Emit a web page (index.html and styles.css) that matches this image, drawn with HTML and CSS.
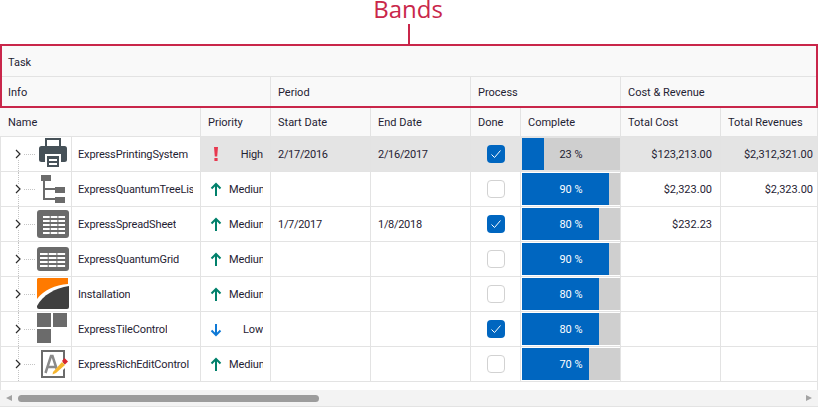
FILE: index.html
```html
<!DOCTYPE html>
<html lang="en">
<head>
  <meta charset="UTF-8">
  <title>Bands</title>
  <link rel="stylesheet" href="styles.css">
</head>
<body>
  <!-- Callout over the band rows -->
  <div class="callout">Bands</div>
  <div class="callout-line"></div>

  <div class="bands">
    <div class="band-row">
      <div class="band band-full">Task</div>
    </div>
    <div class="band-row band-grid">
      <div class="band">Info</div>
      <div class="band">Period</div>
      <div class="band">Process</div>
      <div class="band">Cost &amp; Revenue</div>
    </div>
  </div>

  <!-- Column headers -->
  <div class="row head">
    <div class="cell">Name</div>
    <div class="cell">Priority</div>
    <div class="cell">Start Date</div>
    <div class="cell">End Date</div>
    <div class="cell">Done</div>
    <div class="cell">Complete</div>
    <div class="cell">Total Cost</div>
    <div class="cell">Total Revenues</div>
  </div>

  <!-- Data rows -->
  <div class="row selected">
    <div class="cell name">
      <div class="tree first"><svg class="chevron" viewBox="0 0 6 10"><path d="M1 1l4 4-4 4"/></svg></div>
      <svg class="icon" viewBox="0 0 32 34">
        <path fill="none" stroke="#465158" stroke-width="2" d="M9 10V2h14v8"/>
        <rect x="2" y="9" width="28" height="16" rx="2.500" fill="#465158"/>
        <rect x="8" y="17" width="16" height="15" fill="#fff"/>
        <rect x="10" y="19" width="12" height="11" fill="#465158"/>
        <path stroke="#fff" stroke-width="2" d="M12 23h8M12 27h8"/>
      </svg>
      <div class="label"><div class="label-text">ExpressPrintingSystem</div></div>
    </div>
    <div class="cell priority">
      <svg class="prio" viewBox="0 0 12 16"><path fill="#e8384f" d="M4 1h4l-.8 9.500H4.800zM4.400 12h3.200v3H4.400z"/></svg>
      <div class="prio-text">High</div>
    </div>
    <div class="cell date">2/17/2016</div>
    <div class="cell date">2/16/2017</div>
    <div class="cell done"><div class="check on"><svg viewBox="0 0 18 18"><path d="M4.500 9.500l3 3 6-7"/></svg></div></div>
    <div class="cell progress"><div class="track"><div class="fill" style="width: 22px"></div><div class="pct">23 %</div></div></div>
    <div class="cell money">$123,213.00</div>
    <div class="cell money">$2,312,321.00</div>
  </div>

  <div class="row">
    <div class="cell name">
      <div class="tree"><svg class="chevron" viewBox="0 0 6 10"><path d="M1 1l4 4-4 4"/></svg></div>
      <svg class="icon" viewBox="0 0 32 34">
        <path fill="#6b6b6b" d="M4 3h10v6H8v7h10v2H8v8h10v2H6V9H4z"/>
        <path fill="#6b6b6b" d="M18 15h10v6H18zM18 25h10v6H18z"/>
      </svg>
      <div class="label"><div class="label-text">ExpressQuantumTreeList</div></div>
    </div>
    <div class="cell priority">
      <svg class="prio" viewBox="0 0 12 16"><path class="arrow-up" d="M6 15V3M1.500 7.500L6 3l4.500 4.500"/></svg>
      <div class="prio-text">Medium</div>
    </div>
    <div class="cell"></div>
    <div class="cell"></div>
    <div class="cell done"><div class="check"></div></div>
    <div class="cell progress"><div class="track"><div class="fill" style="width: 87px"></div><div class="pct light">90 %</div></div></div>
    <div class="cell money">$2,323.00</div>
    <div class="cell money">$2,323.00</div>
  </div>

  <div class="row">
    <div class="cell name">
      <div class="tree"><svg class="chevron" viewBox="0 0 6 10"><path d="M1 1l4 4-4 4"/></svg></div>
      <svg class="icon" viewBox="0 0 32 34">
        <rect y="3" width="32" height="28" rx="3" fill="#6b6b6b"/>
        <path stroke="#fff" stroke-width="2" stroke-dasharray="6.700 1" d="M6 10h22M6 14h22M6 18h22M6 22h22M6 26h22"/>
      </svg>
      <div class="label"><div class="label-text">ExpressSpreadSheet</div></div>
    </div>
    <div class="cell priority">
      <svg class="prio" viewBox="0 0 12 16"><path class="arrow-up" d="M6 15V3M1.500 7.500L6 3l4.500 4.500"/></svg>
      <div class="prio-text">Medium</div>
    </div>
    <div class="cell date">1/7/2017</div>
    <div class="cell date">1/8/2018</div>
    <div class="cell done"><div class="check on"><svg viewBox="0 0 18 18"><path d="M4.500 9.500l3 3 6-7"/></svg></div></div>
    <div class="cell progress"><div class="track"><div class="fill" style="width: 77px"></div><div class="pct light">80 %</div></div></div>
    <div class="cell money">$232.23</div>
    <div class="cell money"></div>
  </div>

  <div class="row">
    <div class="cell name">
      <div class="tree"><svg class="chevron" viewBox="0 0 6 10"><path d="M1 1l4 4-4 4"/></svg></div>
      <svg class="icon" viewBox="0 0 32 34">
        <rect y="5" width="32" height="24" rx="3" fill="#6b6b6b"/>
        <path stroke="#fff" stroke-width="2" stroke-dasharray="7.700 1" d="M3 12h26M3 16h26M3 20h26M3 24h26"/>
      </svg>
      <div class="label"><div class="label-text">ExpressQuantumGrid</div></div>
    </div>
    <div class="cell priority">
      <svg class="prio" viewBox="0 0 12 16"><path class="arrow-up" d="M6 15V3M1.500 7.500L6 3l4.500 4.500"/></svg>
      <div class="prio-text">Medium</div>
    </div>
    <div class="cell"></div>
    <div class="cell"></div>
    <div class="cell done"><div class="check"></div></div>
    <div class="cell progress"><div class="track"><div class="fill" style="width: 87px"></div><div class="pct light">90 %</div></div></div>
    <div class="cell money"></div>
    <div class="cell money"></div>
  </div>

  <div class="row">
    <div class="cell name">
      <div class="tree"><svg class="chevron" viewBox="0 0 6 10"><path d="M1 1l4 4-4 4"/></svg></div>
      <svg class="icon" viewBox="0 0 32 34">
        <path fill="#ff7a00" d="M1 1h30v6C18 8 7 13 0 22V2z"/>
        <path fill="#3f3f3f" d="M32 9v21a2 2 0 0 1-2 2H2a2 2 0 0 1-2-2v-1C6 18 18 11 32 9z"/>
      </svg>
      <div class="label"><div class="label-text">Installation</div></div>
    </div>
    <div class="cell priority">
      <svg class="prio" viewBox="0 0 12 16"><path class="arrow-up" d="M6 15V3M1.500 7.500L6 3l4.500 4.500"/></svg>
      <div class="prio-text">Medium</div>
    </div>
    <div class="cell"></div>
    <div class="cell"></div>
    <div class="cell done"><div class="check"></div></div>
    <div class="cell progress"><div class="track"><div class="fill" style="width: 77px"></div><div class="pct light">80 %</div></div></div>
    <div class="cell money"></div>
    <div class="cell money"></div>
  </div>

  <div class="row">
    <div class="cell name">
      <div class="tree"><svg class="chevron" viewBox="0 0 6 10"><path d="M1 1l4 4-4 4"/></svg></div>
      <svg class="icon" viewBox="0 0 32 34">
        <path fill="#6b6b6b" d="M0 1h14v14H0zM16 1h14v14H16zM0 17h14v14H0z"/>
      </svg>
      <div class="label"><div class="label-text">ExpressTileControl</div></div>
    </div>
    <div class="cell priority">
      <svg class="prio" viewBox="0 0 12 16"><path class="arrow-down" d="M6 3v11M1.500 9.500L6 14l4.500-4.500"/></svg>
      <div class="prio-text">Low</div>
    </div>
    <div class="cell"></div>
    <div class="cell"></div>
    <div class="cell done"><div class="check on"><svg viewBox="0 0 18 18"><path d="M4.500 9.500l3 3 6-7"/></svg></div></div>
    <div class="cell progress"><div class="track"><div class="fill" style="width: 77px"></div><div class="pct light">80 %</div></div></div>
    <div class="cell money"></div>
    <div class="cell money"></div>
  </div>

  <div class="row">
    <div class="cell name">
      <div class="tree"><svg class="chevron" viewBox="0 0 6 10"><path d="M1 1l4 4-4 4"/></svg></div>
      <svg class="icon" viewBox="0 0 32 34">
        <rect x="5" y="4" width="22" height="26" fill="#fff" stroke="#6b6b6b" stroke-width="2"/>
        <path fill="none" stroke="#8a8a8a" stroke-width="2.500" d="M8.500 26l5.500-17h1.500l5.500 17M11 20h9"/>
        <path fill="#fff" d="M15 27l10-12 5 4-10 10z"/>
        <path fill="#f5b52e" d="M16 25l9-10 3 3-9 8-3.500 1.500z"/>
        <path fill="#d9262e" d="M25 14l2.500-3 3.500 3.500-3 3z"/>
      </svg>
      <div class="label"><div class="label-text">ExpressRichEditControl</div></div>
    </div>
    <div class="cell priority">
      <svg class="prio" viewBox="0 0 12 16"><path class="arrow-up" d="M6 15V3M1.500 7.500L6 3l4.500 4.500"/></svg>
      <div class="prio-text">Medium</div>
    </div>
    <div class="cell"></div>
    <div class="cell"></div>
    <div class="cell done"><div class="check"></div></div>
    <div class="cell progress"><div class="track"><div class="fill" style="width: 67px"></div><div class="pct light">70 %</div></div></div>
    <div class="cell money"></div>
    <div class="cell money"></div>
  </div>

  <!-- Empty area and horizontal scrollbar -->
  <div class="blank"></div>
  <div class="scrollbar">
    <div class="scroll-left"></div>
    <div class="thumb"></div>
    <div class="scroll-right"></div>
  </div>
</body>
</html>
```

FILE: styles.css
```css
body {
  margin: 0;
  background-color: #fff;
  color: #1f2233;
  font-family: Roboto, "Liberation Sans", sans-serif;
  font-size: 11px;
  overflow: hidden;
}

/* Callout */
.callout {
  height: 24px;
  padding-right: 2px;
  line-height: 18px;
  text-align: center;
  color: #c9264a;
  font-family: "Open Sans", sans-serif;
  font-size: 24px;
}

.callout-line {
  width: 2px;
  height: 20px;
  margin-left: 408px;
  background-color: #c9264a;
}

/* Bands */
.bands {
  height: 64px;
  box-sizing: border-box;
  border: 2px solid #c9264a;
  background-color: #f9f9f9;
}

.band-row {
  height: 31px;
  box-sizing: border-box;
  border-bottom: 1px solid #e3e3e3;
}

.band-row.band-grid {
  height: 29px;
  border-bottom: none;
  display: grid;
  grid-template-columns: 269px 200px 150px 1fr;
}

.band {
  display: flex;
  align-items: center;
  height: 100%;
  padding-left: 7px;
  padding-top: 2px;
  box-sizing: border-box;
  border-right: 1px solid #e3e3e3;
}

.band:first-child {
  padding-left: 6px;
}

.band:last-child,
.band-full {
  border-right: none;
}

/* Grid rows */
.row {
  display: grid;
  grid-template-columns: 201px 70px 100px 100px 50px 100px 100px 97px;
  height: 35px;
  box-sizing: border-box;
}

.row.head {
  height: 29px;
  background-color: #f9f9f9;
}

.row.head .cell {
  padding-top: 1px;
}

.row.selected {
  background-color: #e4e4e4;
}

.cell {
  display: flex;
  align-items: center;
  box-sizing: border-box;
  padding-left: 7px;
  border-right: 1px solid #e3e3e3;
  border-bottom: 1px solid #e3e3e3;
  white-space: nowrap;
  overflow: hidden;
}

.head .cell:first-child {
  padding-left: 8px;
}

.cell.date {
  letter-spacing: -0.3px;
}

/* Name column */
.cell.name {
  padding-left: 0;
  background-color: #fff;
  border-left: 1px solid #e3e3e3;
}

.tree {
  position: relative;
  width: 36px;
  height: 34px;
  flex: none;
}

.tree::before {
  content: "";
  position: absolute;
  left: 17px;
  top: 0;
  bottom: 0;
  border-left: 1px dotted #c4c4c4;
}

.tree.first::before {
  top: 17px;
}

.tree::after {
  content: "";
  position: absolute;
  left: 23px;
  width: 11px;
  top: 17px;
  border-top: 1px dotted #c4c4c4;
}

.chevron {
  position: absolute;
  left: 14px;
  top: 12px;
  width: 6px;
  height: 10px;
  background-color: #fff;
}

.chevron path {
  fill: none;
  stroke: #2b2b2b;
  stroke-width: 1.2;
}

.icon {
  width: 32px;
  height: 34px;
  flex: none;
  margin-right: 2px;
}

.label {
  align-self: stretch;
  display: flex;
  align-items: center;
  flex: 1;
  min-width: 0;
  padding-left: 6px;
  padding-right: 7px;
  border-left: 1px solid #e3e3e3;
  letter-spacing: -0.15px;
}

.label-text {
  min-width: 0;
  overflow: hidden;
}

/* Priority column */
.cell.priority {
  padding-left: 9px;
  padding-right: 7px;
}

.prio {
  width: 12px;
  height: 16px;
  flex: none;
  margin-right: 7px;
}

.prio-text {
  flex: 1;
  min-width: 0;
  overflow: hidden;
  text-align: right;
  letter-spacing: -0.15px;
}

.arrow-up {
  fill: none;
  stroke: #00806b;
  stroke-width: 2;
}

.arrow-down {
  fill: none;
  stroke: #0f79d6;
  stroke-width: 2;
}

/* Done column */
.cell.done {
  justify-content: center;
  padding-left: 0;
}

.check {
  width: 18px;
  height: 18px;
  box-sizing: border-box;
  background-color: #fff;
  border: 1px solid #d2d2d2;
  border-radius: 4px;
}

.check.on {
  background-color: #0066c0;
  border: none;
}

.check svg {
  display: block;
}

.check path {
  fill: none;
  stroke: #fff;
  stroke-width: 1;
}

/* Complete column */
.cell.progress {
  padding: 1px 0 1px 1px;
}

.track {
  display: grid;
  width: 100%;
  height: 100%;
  background-color: #cfcfcf;
}

.fill,
.pct {
  grid-area: 1 / 1;
}

.fill {
  background-color: #0066c0;
}

.pct {
  align-self: center;
  text-align: center;
}

.pct.light {
  color: #fff;
}

/* Money columns */
.cell.money {
  justify-content: flex-end;
  padding-left: 0;
  padding-right: 8px;
}

.cell.money:last-child {
  padding-right: 4px;
}

/* Bottom */
.blank {
  height: 8px;
  border-left: 1px solid #e3e3e3;
  border-right: 1px solid #e3e3e3;
}

.scrollbar {
  display: flex;
  align-items: center;
  height: 17px;
  box-sizing: border-box;
  background-color: #f3f3f3;
  border-bottom: 1px solid #e3e3e3;
}

.scroll-left {
  width: 0;
  height: 0;
  margin-left: 6px;
  border-style: solid;
  border-width: 3.500px 6px 3.500px 0;
  border-color: transparent #a3a3a3 transparent transparent;
}

.thumb {
  width: 301px;
  height: 7px;
  margin-left: 6px;
  background-color: #9c9c9c;
  border-radius: 4px;
}

.scroll-right {
  width: 0;
  height: 0;
  margin-left: auto;
  margin-right: 6px;
  border-style: solid;
  border-width: 3.500px 0 3.500px 6px;
  border-color: transparent transparent transparent #a3a3a3;
}
```
